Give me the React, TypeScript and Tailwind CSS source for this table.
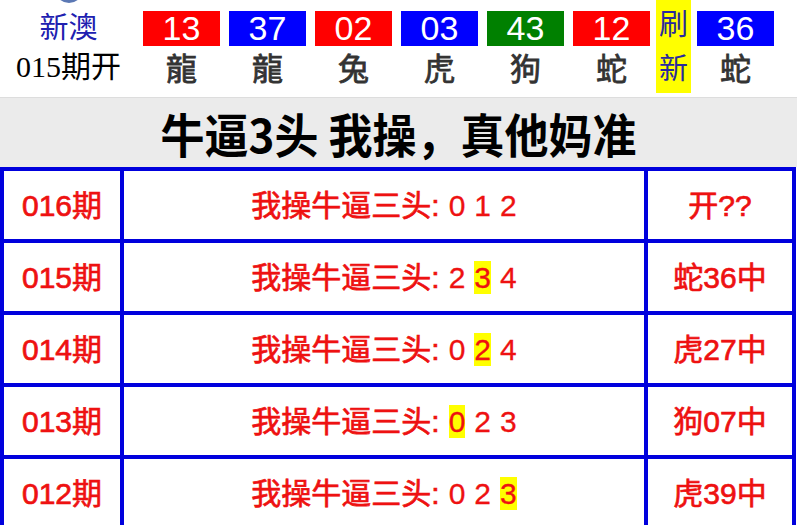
import React from "react";

const balls = [
  { n: "13", c: "bg-[#ff0000]", z: "龍" },
  { n: "37", c: "bg-[#0000ff]", z: "龍" },
  { n: "02", c: "bg-[#ff0000]", z: "兔" },
  { n: "03", c: "bg-[#0000ff]", z: "虎" },
  { n: "43", c: "bg-[#008000]", z: "狗" },
  { n: "12", c: "bg-[#ff0000]", z: "蛇" },
];

const rows = [
  { q: "016期", d: ["0", "1", "2"], h: -1, r: "开??" },
  { q: "015期", d: ["2", "3", "4"], h: 1, r: "蛇36中" },
  { q: "014期", d: ["0", "2", "4"], h: 1, r: "虎27中" },
  { q: "013期", d: ["0", "2", "3"], h: 0, r: "狗07中" },
  { q: "012期", d: ["0", "2", "3"], h: 2, r: "虎39中" },
];

const sans = { fontFamily: '"Liberation Sans", Arial, "Noto Sans CJK SC", sans-serif' };

function Ball({ n, c, z }: { n: string; c: string; z: string }) {
  return (
    <div className="flex flex-col items-center w-[77px]">
      <div
        className={`${c} w-[77px] h-[35px] mt-[11px] flex items-center justify-center text-white text-[34px] leading-[35px]`}
        style={sans}
      >
        {n}
      </div>
      <div
        className="text-[#333333] text-[31px] leading-[31px] mt-[5px] [-webkit-text-stroke:0.8px_#333333]"
        style={{ fontFamily: '"Noto Sans CJK TC", "Noto Sans CJK SC", sans-serif' }}
      >
        {z}
      </div>
    </div>
  );
}

const cell =
  "border-r-4 border-b-4 border-[#0000dd] flex items-center justify-center text-[#ee1111] text-[30px] [-webkit-text-stroke:0.7px_#ee1111]";

export default function App() {
  return (
    <div className="w-[800px] h-[525px] overflow-hidden bg-white">
      <div className="w-[797px]">
        {/* header */}
        <div className="h-[97px] flex">
          <div className="w-[137px] flex flex-col items-center">
            <div className="h-[3px] overflow-hidden w-[30px] flex justify-center">
              <div className="w-[28px] h-[28px] rounded-full bg-[#5b78b4] -mt-[25px] shrink-0" />
            </div>
            <div
              className="text-[#2020b0] text-[29px] leading-none mt-[8px]"
              style={{ fontFamily: '"Noto Sans CJK SC", sans-serif' }}
            >
              新澳
            </div>
            <div
              className="text-black text-[30px] leading-none mt-[12px]"
              style={{ fontFamily: '"Liberation Serif", "Noto Sans CJK SC", serif' }}
            >
              015期开
            </div>
          </div>
          <div className="flex ml-[6px] gap-[9px]">
            {balls.map((b, i) => (
              <Ball key={i} {...b} />
            ))}
          </div>
          <div
            className="ml-[6px] w-[35px] h-[93px] bg-[#ffff00] flex flex-col items-center text-[#2a2a9e] text-[29px] leading-none"
            style={{ fontFamily: '"Noto Sans CJK SC", sans-serif' }}
          >
            <span className="mt-[8px]">刷</span>
            <span className="mt-[15px]">新</span>
          </div>
          <div className="ml-[6px]">
            <Ball n="36" c="bg-[#0000ff]" z="蛇" />
          </div>
        </div>

        {/* title band */}
        <div className="h-[70px] bg-[#ebebeb] border-t border-[#dddddd] flex items-center justify-center">
          <div
            className="text-black text-[44px] font-bold leading-none scale-y-[1.05]"
            style={{ fontFamily: '"Noto Sans CJK SC", sans-serif' }}
          >
            牛逼3头 我操，真他妈准
          </div>
        </div>

        {/* table */}
        <div className="w-[796px] border-t-4 border-l-4 border-[#0000dd]">
          {rows.map((r, i) => (
            <div key={i} className="grid grid-cols-[120px_524px_148px] h-[72px]">
              <div className={cell} style={sans}>
                {r.q}
              </div>
              <div className={cell} style={sans}>
                <span>我操牛逼三头:</span>
                {r.d.map((d, j) => (
                  <React.Fragment key={j}>
                    <span className="w-[9px]" />
                    <span
                      className={
                        j === r.h
                          ? "bg-[#ffff00] leading-[33px] [-webkit-text-stroke:0.3px_#ee1111]"
                          : "[-webkit-text-stroke:0.3px_#ee1111]"
                      }
                    >
                      {d}
                    </span>
                  </React.Fragment>
                ))}
              </div>
              <div className={cell} style={sans}>
                {r.r}
              </div>
            </div>
          ))}
        </div>
      </div>
    </div>
  );
}
